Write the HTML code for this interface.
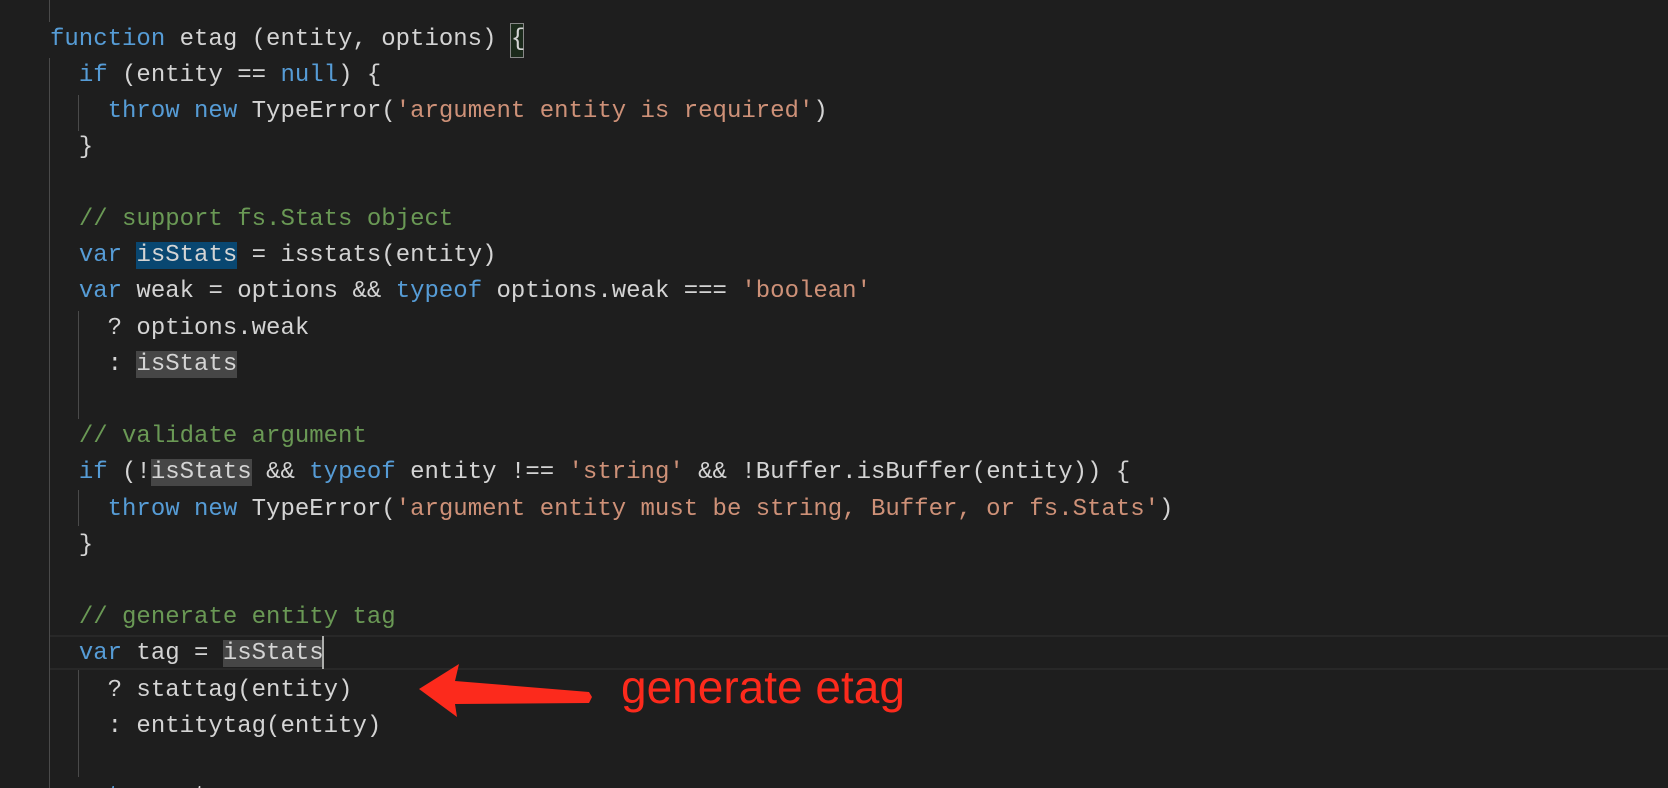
<!DOCTYPE html>
<html><head><meta charset="utf-8"><style>
html,body{margin:0;padding:0;background:#1e1e1e;width:1668px;height:788px;overflow:hidden;position:relative}
.l{position:absolute;left:50px;height:36.2px;line-height:36.2px;font-family:"Liberation Mono",monospace;font-size:24px;color:#d4d4d4;white-space:pre}
.k{color:#569cd6}.s{color:#ce9178}.c{color:#6a9955}
.sel{background:#094771}.hl{background:#464646}
.g{position:absolute;width:1px;background:#4a4a4a}
</style></head><body>
<div style="position:absolute;left:50px;top:635px;width:1618px;height:31px;border-top:2px solid #282828;border-bottom:2px solid #282828"></div>
<div class="g" style="left:49px;top:0;height:22px"></div>
<div class="g" style="left:49px;top:58px;height:730px"></div>
<div class="g" style="left:78px;top:95px;height:36px"></div>
<div class="g" style="left:78px;top:311px;height:108px"></div>
<div class="g" style="left:78px;top:490px;height:36px"></div>
<div class="g" style="left:78px;top:670px;height:107px"></div>
<div style="position:absolute;left:510px;top:23px;width:12px;height:33px;border:1px solid #888;background:#1b2a1b"></div>
<div class="l" style="top:22px"><span class="k">function</span> etag (entity, options) {</div>
<div class="l" style="top:58px">  <span class="k">if</span> (entity == <span class="k">null</span>) {</div>
<div class="l" style="top:94px">    <span class="k">throw</span> <span class="k">new</span> TypeError(<span class="s">'argument entity is required'</span>)</div>
<div class="l" style="top:130px">  }</div>
<div class="l" style="top:202px">  <span class="c">// support fs.Stats object</span></div>
<div class="l" style="top:238.2px">  <span class="k">var</span> <span class="sel">isStats</span> = isstats(entity)</div>
<div class="l" style="top:274.4px">  <span class="k">var</span> weak = options &amp;&amp; <span class="k">typeof</span> options.weak === <span class="s">'boolean'</span></div>
<div class="l" style="top:310.6px">    ? options.weak</div>
<div class="l" style="top:346.8px">    : <span class="hl">isStats</span></div>
<div class="l" style="top:419.2px">  <span class="c">// validate argument</span></div>
<div class="l" style="top:455.4px">  <span class="k">if</span> (!<span class="hl">isStats</span> &amp;&amp; <span class="k">typeof</span> entity !== <span class="s">'string'</span> &amp;&amp; !Buffer.isBuffer(entity)) {</div>
<div class="l" style="top:491.6px">    <span class="k">throw</span> <span class="k">new</span> TypeError(<span class="s">'argument entity must be string, Buffer, or fs.Stats'</span>)</div>
<div class="l" style="top:527.8px">  }</div>
<div class="l" style="top:600.2px">  <span class="c">// generate entity tag</span></div>
<div class="l" style="top:636.4px">  <span class="k">var</span> tag = <span class="hl">isStats</span></div>
<div style="position:absolute;left:322px;top:636px;width:2px;height:33px;background:#aeafad"></div>
<div class="l" style="top:672.6px">    ? stattag(entity)</div>
<div class="l" style="top:708.8px">    : entitytag(entity)</div>
<div class="l" style="top:779px">  <span class="k">return</span> etag</div>
<svg style="position:absolute;left:0;top:0" width="1668" height="788"><polygon points="419,689 459,664 455,681 589,692 592,697 589,703 455,704 457,717" fill="#fc2a1c"/></svg>
<div style="position:absolute;left:621px;top:662px;font-family:'Liberation Sans',sans-serif;font-size:46px;line-height:50px;color:#fc2a1c;white-space:nowrap">generate etag</div>
</body></html>
